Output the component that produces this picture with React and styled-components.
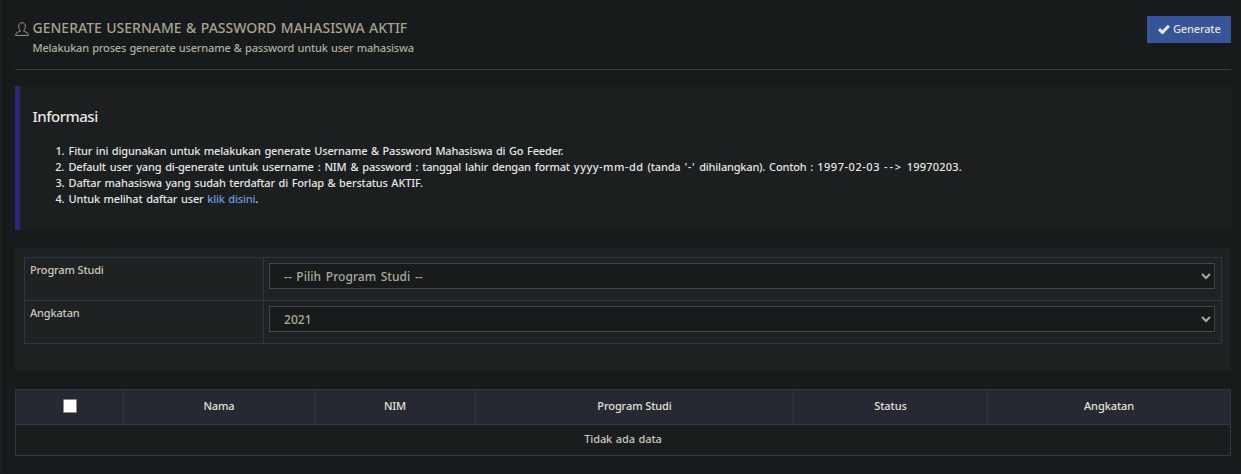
import React from "react";
import styled, { createGlobalStyle } from "styled-components";

const GlobalStyle = createGlobalStyle`
  *, *::before, *::after { box-sizing: border-box; }
  body {
    margin: 0;
    background: #171b1b;
    color: #cbc7be;
    font-family: "Noto Sans", "Open Sans", sans-serif;
    font-size: 11px;
    font-weight: 500;
    line-height: 16px;
    letter-spacing: -0.1px;
  }
`;

const Page = styled.div`
  height: 474px;
  padding: 16px 10px 0 14px;
  border-left: 1px solid #1e2222;
  border-bottom: 1px solid #1b161b;
  overflow: hidden;
`;

const Header = styled.header`
  display: flex;
  justify-content: space-between;
  align-items: flex-start;
  height: 54px;
  border-bottom: 1px solid #3a3e3e;
`;

const Heading = styled.div`
  display: flex;
  gap: 4px;
  color: #a8a294;
`;

const UserIcon = styled.svg`
  width: 14px;
  height: 14px;
  margin: 6px 0 0 -0.5px;
  fill: none;
  stroke: #9d9789;
  stroke-width: 1;
  stroke-linejoin: round;
`;

const Title = styled.h1`
  margin: 2px 0 2px;
  font-size: 14px;
  line-height: 20px;
  font-weight: 500;
  letter-spacing: 0;
  word-spacing: 0.8px;
  white-space: nowrap;
`;

const Subtitle = styled.p`
  margin: 0;
  color: #b1aca0;
  letter-spacing: -0.18px;
  word-spacing: 0.6px;
  white-space: nowrap;
`;

const GenerateButton = styled.button`
  display: flex;
  align-items: center;
  gap: 3px;
  width: 84px;
  height: 27px;
  padding: 0 0 1px 11px;
  border: 0;
  background: #375499;
  color: #e3e0da;
  font: 500 11px/16px "Noto Sans", sans-serif;
  letter-spacing: -0.15px;
`;

const CheckIcon = styled.svg`
  width: 12px;
  height: 11px;
  fill: #e8e6e3;
`;

const InfoBox = styled.section`
  height: 144px;
  margin-top: 16px;
  padding: 19px 12px 0;
  border-left: 5px solid #2b2878;
  background: #1b1f20;
  color: #e8e6e3;
`;

const InfoTitle = styled.h2`
  margin: 0 0 16px;
  padding-left: 0.5px;
  font-size: 15px;
  line-height: 22px;
  font-weight: 500;
  letter-spacing: -0.5px;
`;

const InfoList = styled.ol`
  margin: 0;
  padding-left: 36px;
  letter-spacing: -0.16px;
  word-spacing: 0.9px;
  white-space: nowrap;
`;

const InfoItem = styled.li`
  padding-left: 0.5px;
  letter-spacing: ${(p) => (p.$loose ? "-0.19px" : "inherit")};
  word-spacing: ${(p) => (p.$loose ? "1.3px" : "inherit")};
`;

const Spaced = styled.span`
  letter-spacing: ${(p) => p.$by}px;
`;

const Link = styled.a`
  color: #6f9be0;
  text-decoration: none;
`;

const FilterPanel = styled.section`
  height: 123px;
  margin-top: 18px;
  padding: 9px;
  background: #1e2222;
`;

const FilterTable = styled.div`
  border: 1px solid #2a364a;
`;

const FilterRow = styled.div`
  display: grid;
  grid-template-columns: 239px 1fr;
  height: 43px;

  & + & {
    border-top: 1px solid #2a364a;
  }
  &:first-child {
    height: 42px;
  }
`;

const FilterLabel = styled.label`
  padding: 4px 5px;
  border-right: 1px solid #2a364a;
  letter-spacing: -0.15px;
`;

const FilterField = styled.div`
  display: grid;
  align-items: start;
  padding: 5px 6px 0 5px;
`;

const Select = styled.select`
  grid-area: 1 / 1;
  width: 100%;
  height: 26px;
  padding: 2px 14px 0;
  border: 1px solid #414546;
  border-radius: 0;
  appearance: none;
  background: #171b1b;
  color: #aea99c;
  font: 500 12px/18px "Noto Sans", sans-serif;
  letter-spacing: 0.05px;
  word-spacing: 1.4px;
`;

const Chevron = styled.svg`
  grid-area: 1 / 1;
  justify-self: end;
  width: 10px;
  height: 7px;
  margin: 10px 4px 0 0;
  fill: none;
  stroke: #aea99c;
  stroke-width: 2;
  pointer-events: none;
`;

const DataTable = styled.table`
  width: 1216px;
  margin-top: 18px;
  border-collapse: collapse;
  table-layout: fixed;
`;

const Column = styled.col`
  width: ${(p) => p.$width}px;
`;

const HeadCell = styled.th`
  height: 35px;
  padding: 0 0 2px;
  border: 1px solid #2a364a;
  background: #262931;
  color: #e3e0da;
  font-weight: 500;
  text-align: center;
`;

const EmptyCell = styled.td`
  height: 31px;
  padding: 0 0 2px;
  border: 1px solid #2a364a;
  background: #191d1d;
  text-align: center;
  word-spacing: 0.9px;
`;

const Checkbox = styled.input`
  display: block;
  width: 14px;
  height: 14px;
  margin: 0 auto;
  border: 1px solid #8b8c8f;
  border-radius: 1px;
  appearance: none;
  background: #fff;
`;

const columns = [
  { width: 108 },
  { label: "Nama", width: 191 },
  { label: "NIM", width: 161 },
  { label: "Program Studi", width: 318 },
  { label: "Status", width: 194 },
  { label: "Angkatan", width: 243 },
];

const filters = [
  { label: "Program Studi", id: "prodi", value: "-- Pilih Program Studi --" },
  { label: "Angkatan", id: "angkatan", value: "2021" },
];

export default function App() {
  return (
    <Page>
      <GlobalStyle />
      <Header>
        <Heading>
          <UserIcon viewBox="0 0 14 14">
            <path d="M5.2 8.3C4 7.300 3.700 5.700 3.700 4.200C3.700 2 5 .7 7 .7S10.300 2 10.300 4.200C10.300 5.700 10 7.300 8.800 8.300V9.300C10.800 10.100 13.400 10.500 13.400 13.400H.6C.6 10.500 3.200 10.100 5.200 9.300Z" />
          </UserIcon>
          <div>
            <Title>GENERATE USERNAME &amp; PASSWORD MAHASISWA AKTIF</Title>
            <Subtitle>Melakukan proses generate username &amp; password untuk user mahasiswa</Subtitle>
          </div>
        </Heading>
        <GenerateButton type="button">
          <CheckIcon viewBox="0 0 12 11">
            <path d="M0 6.200L2 4.100L4.400 6.300L9.900.7L12 2.700L4.500 10.400Z" />
          </CheckIcon>
          Generate
        </GenerateButton>
      </Header>

      <InfoBox>
        <InfoTitle>Informasi</InfoTitle>
        <InfoList>
          <InfoItem>Fitur ini digunakan untuk melakukan generate Username &amp; Password Mahasiswa di Go Feeder.</InfoItem>
          <InfoItem $loose>
            Default user yang di-generate untuk username : NIM &amp; password : tanggal lahir dengan format{" "}
            <Spaced $by={0.5}>yyyy-mm-dd</Spaced> (tanda <Spaced $by={0.7}>'-'</Spaced> dihilangkan). Contoh :{" "}
            <Spaced $by={0.55}>1997-02-03</Spaced> <Spaced $by={1.8}>--&gt;</Spaced>{" "}
            <Spaced $by={0.2}>19970203.</Spaced>
          </InfoItem>
          <InfoItem>Daftar mahasiswa yang sudah terdaftar di Forlap &amp; berstatus AKTIF.</InfoItem>
          <InfoItem>
            Untuk melihat daftar user <Link href="#">klik disini</Link>.
          </InfoItem>
        </InfoList>
      </InfoBox>

      <FilterPanel>
        <FilterTable>
          {filters.map((f) => (
            <FilterRow key={f.id}>
              <FilterLabel htmlFor={f.id}>{f.label}</FilterLabel>
              <FilterField>
                <Select id={f.id} defaultValue={f.value}>
                  <option>{f.value}</option>
                </Select>
                <Chevron viewBox="0 0 10 7">
                  <path d="M1 1L5 5L9 1" />
                </Chevron>
              </FilterField>
            </FilterRow>
          ))}
        </FilterTable>
      </FilterPanel>

      <DataTable>
        <colgroup>
          {columns.map((c) => (
            <Column key={c.width} $width={c.width} />
          ))}
        </colgroup>
        <thead>
          <tr>
            {columns.map((c) => (
              <HeadCell key={c.width}>{c.label || <Checkbox type="checkbox" />}</HeadCell>
            ))}
          </tr>
        </thead>
        <tbody>
          <tr>
            <EmptyCell colSpan={6}>Tidak ada data</EmptyCell>
          </tr>
        </tbody>
      </DataTable>
    </Page>
  );
}
